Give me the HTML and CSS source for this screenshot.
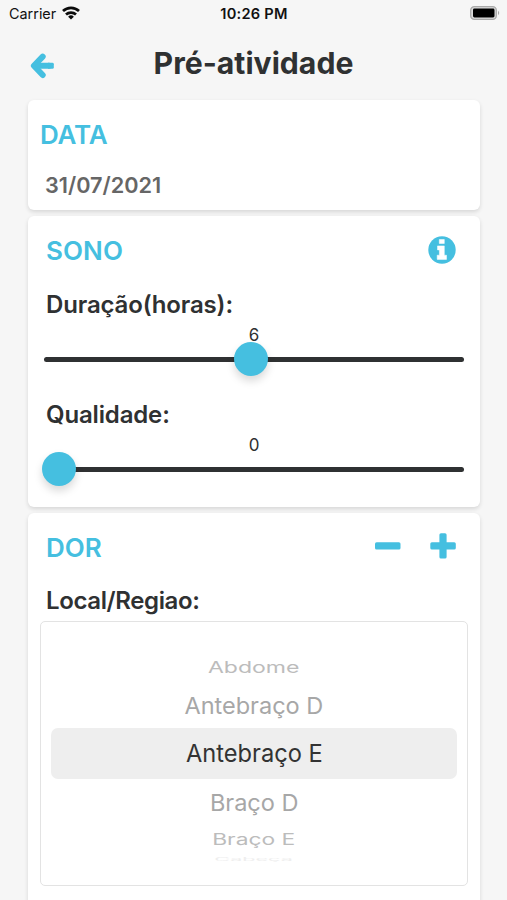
FILE: index.html
```html
<!DOCTYPE html>
<html lang="pt-BR">
<head>
<meta charset="utf-8">
<title>Pré-atividade</title>
<link rel="stylesheet" href="styles.css">
</head>
<body>
<div class="status">
  <div class="carrier"><span class="carrier-name">Carrier</span>
    <svg class="wifi" viewBox="0 0 18 14" width="18" height="14" fill="none" stroke="#0b0b0b" stroke-width="2.7"><path d="M1 5.1a11.6 11.6 0 0 1 16 0"/><path d="M4 8.6a7.3 7.3 0 0 1 10 0"/><path d="M9 13.6 6.1 10.7a4.2 4.2 0 0 1 5.8 0Z" fill="#0b0b0b" stroke="none"/></svg>
  </div>
  <div class="clock">10:26 PM</div>
  <svg class="battery" viewBox="0 0 31 14" width="31" height="14"><rect x=".7" y=".7" width="25.6" height="12.6" rx="3.6" fill="#dcdcdc" stroke="#a9a9a9" stroke-width="1.3"/><rect x="3" y="2.6" width="21.5" height="8.8" rx="1.4"/><path d="M28 4.8q2.4 2.2 0 4.4Z" fill="#a9a9a9"/></svg>
</div>
<header class="header">
  <svg class="back" viewBox="0 0 24 26" width="24" height="26" fill="none" stroke="#45bfe0" stroke-width="6" stroke-linecap="round" stroke-linejoin="round"><path d="M12.7 3.6 3.9 12.8 12.7 22" /><path d="M5 12.8H19" /><path d="M18 9.8h4.4q1.400 0 1.400 1.400v3.200q0 1.400-1.400 1.400H18Z" fill="#45bfe0" stroke="none"/><path d="M5 12.800 10 8v9.600Z" fill="#45bfe0" stroke="none"/></svg>
  <h1 class="title">Pré-atividade</h1>
</header>
<main class="cards">
  <section class="card card-date">
    <h2 class="heading heading-date">DATA</h2>
    <p class="date">31/07/2021</p>
  </section>
  <section class="card card-sleep">
    <div class="card-head"><h2 class="heading heading-sleep">SONO</h2>
      <svg class="info" viewBox="0 0 28 28" width="28" height="28"><circle cx="14" cy="14" r="13.7" fill="#45bfe0"/><path d="M11.3 3.5h5v4h-5zM9.500 9.900h6.800v9.300h2.200v4.200H9.200v-4.200h2.200v-5.300H9.500z" fill="#fff" stroke="#fff" stroke-width=".5" stroke-linejoin="round"/></svg>
    </div>
    <h3 class="label label-duration">Duração(horas):</h3>
    <div class="value">6</div>
    <div class="slider"><div class="knob knob-mid"></div></div>
    <h3 class="label label-quality">Qualidade:</h3>
    <div class="value">0</div>
    <div class="slider"><div class="knob knob-start"></div></div>
  </section>
  <section class="card card-pain">
    <div class="card-head"><h2 class="heading heading-pain">DOR</h2>
      <svg class="adjust" viewBox="0 0 82 26" width="82" height="26" fill="#45bfe0"><rect x="0" y="9.2" width="25.5" height="7.4" rx="1.6"/><path d="M66 .2h4q1.6 0 1.6 1.6v7.4h7.6q1.6 0 1.6 1.6V15q0 1.6-1.6 1.6h-7.6V24q0 1.6-1.6 1.6h-4q-1.6 0-1.6-1.6v-7.4h-7.5q-1.6 0-1.6-1.6v-4.2q0-1.6 1.6-1.6h7.5V1.800q0-1.6 1.6-1.6Z"/></svg>
    </div>
    <h3 class="label label-place">Local/Regiao:</h3>
    <div class="picker">
      <div class="option far-up"><span>Abdome</span></div>
      <div class="option near-up"><span>Antebraço D</span></div>
      <div class="option selected"><span>Antebraço E</span></div>
      <div class="option near-down"><span>Braço D</span></div>
      <div class="option far-down"><span>Braço E</span></div>
      <div class="option edge"><span>Cabeça</span></div>
    </div>
  </section>
</main>
</body>
</html>
```

FILE: styles.css
```css
* { box-sizing: border-box; }
body { margin: 0; height: 900px; overflow: hidden; background: #f6f6f6; color: #2f3132; font-family: Inter, "Liberation Sans", sans-serif; }
h1, h2, h3, p { margin: 0; white-space: nowrap; }
svg { display: block; flex: none; }
.status { display: grid; grid-template-columns: 1fr auto 1fr; height: 28px; padding: 0 6px 0 9px; align-items: center; color: #111; font-size: 14px; line-height: 28px; }
.carrier { display: flex; align-items: center; gap: 6px; }
.carrier-name { font-size: 14.4px; }
.wifi { margin-top: -3px; }
.clock { margin-left: -2px; font-size: 14.6px; font-weight: 600; letter-spacing: .25px; }
.battery { justify-self: end; margin-top: -2px; }
.header { display: grid; grid-template-columns: 30px 1fr 30px; height: 72px; padding: 0 30px; }
.back { margin-top: 25px; }
.title { text-align: center; font-size: 30.2px; font-weight: 700; line-height: 36px; margin-top: 17px; }
.cards { display: flex; flex-direction: column; gap: 6px; padding: 0 27px 0 28px; }
.card { background: #fff; border-radius: 6px; box-shadow: 0 2px 4px rgba(0,0,0,.13); }
.card-date { height: 110px; padding: 19px 12px; }
.heading { color: #45bfe0; font-weight: 600; font-size: 26px; line-height: 32px; }
.heading-date { letter-spacing: -.2px; }
.date { margin: 20px 0 0 5px; color: #666; font-size: 21.7px; line-height: 28px; font-weight: 600; }
.card-sleep { height: 291px; padding: 19px 16px 0; }
.card-head { display: flex; justify-content: space-between; height: 32px; padding: 0 8px 0 2px; }
.heading-sleep { letter-spacing: .1px; }
.info { margin-top: 1px; }
.label { margin-left: 2px; font-size: 24px; line-height: 30px; font-weight: 600; letter-spacing: -.15px; }
.label-duration { margin-top: 23px; }
.value { height: 20px; margin-top: 5px; text-align: center; font-size: 17px; line-height: 20px; }
.slider { position: relative; height: 5px; margin-top: 12px; border-radius: 3px; background: #2f3132; }
.knob { position: absolute; top: -15px; width: 34px; height: 34px; border-radius: 50%; background: #45bfe0; box-shadow: 0 5px 9px rgba(0,0,0,.15); }
.knob-mid { left: 190px; }
.knob-start { left: -2px; }
.label-quality { margin-top: 38px; }
.card-pain { height: 420px; padding: 19px 12px 0; }
.card-pain .card-head { padding: 0 11px 0 6px; }
.adjust { margin-top: 1px; }
.label-place { margin: 22px 0 0 6px; letter-spacing: -.38px; }
.picker { height: 265px; margin-top: 5px; padding: 37px 10px 0; border: 1.5px solid #e3e3e3; border-radius: 5px; overflow: hidden; }
.option { display: flex; align-items: center; justify-content: center; font-size: 24px; white-space: nowrap; line-height: 30px; }
.option span { display: block; }
.far-up { height: 18px; color: #bcbcbc; }
.far-up span { transform: scale(.96, .66); }
.near-up { height: 51px; padding-top: 6px; color: #a7a7a7; }
.near-up span { transform: scale(.98, .95); }
.selected { height: 51px; border-radius: 7px; background: #eee; color: #333; }
.selected span { transform: scale(.985, 1.02); }
.near-down { height: 47px; color: #a7a7a7; }
.near-down span { transform: scale(.98, .95); }
.far-down { height: 27px; color: #bcbcbc; }
.far-down span { transform: scale(.95, .66); }
.edge { height: 14px; color: #eee; }
.edge span { transform: scale(.9, .18); }
```
